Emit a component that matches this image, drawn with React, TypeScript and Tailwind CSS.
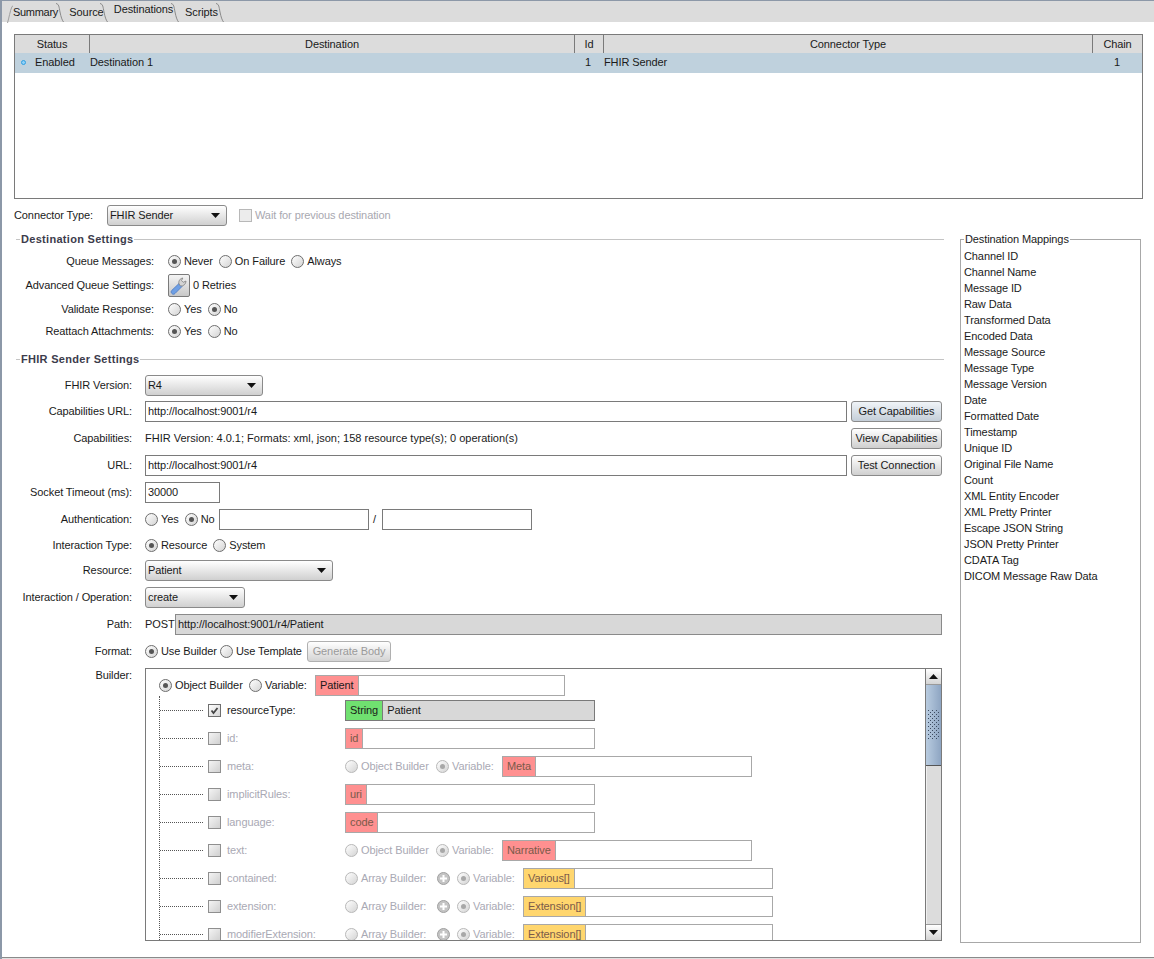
import React from 'react';

const MAPPINGS = [
  'Channel ID', 'Channel Name', 'Message ID', 'Raw Data', 'Transformed Data', 'Encoded Data', 'Message Source',
  'Message Type', 'Message Version', 'Date', 'Formatted Date', 'Timestamp', 'Unique ID', 'Original File Name',
  'Count', 'XML Entity Encoder', 'XML Pretty Printer', 'Escape JSON String', 'JSON Pretty Printer', 'CDATA Tag',
  'DICOM Message Raw Data',
];

type BuilderRow = {
  name: string;
  kind: 'field' | 'object' | 'array';
  type: string;
};

const BUILDER_ROWS: BuilderRow[] = [
  { name: 'id:', kind: 'field', type: 'id' },
  { name: 'meta:', kind: 'object', type: 'Meta' },
  { name: 'implicitRules:', kind: 'field', type: 'uri' },
  { name: 'language:', kind: 'field', type: 'code' },
  { name: 'text:', kind: 'object', type: 'Narrative' },
  { name: 'contained:', kind: 'array', type: 'Various[]' },
  { name: 'extension:', kind: 'array', type: 'Extension[]' },
  { name: 'modifierExtension:', kind: 'array', type: 'Extension[]' },
];

function Radio({ checked, disabled }: { checked?: boolean; disabled?: boolean }) {
  return (
    <span className={`flex h-[13px] w-[13px] shrink-0 items-center justify-center rounded-full border bg-gradient-to-br from-white to-[#d4d4d4] ${disabled ? 'border-[#b8b8b8]' : 'border-[#6e6e6e]'}`}>
      {checked && <span className={`h-[5px] w-[5px] rounded-full ${disabled ? 'bg-[#a8a8a8]' : 'bg-[#555555]'}`} />}
    </span>
  );
}

function RadioLabel({ label, checked, disabled, className = '' }: { label: string; checked?: boolean; disabled?: boolean; className?: string }) {
  return (
    <span className={`flex items-center gap-[3px] ${disabled ? 'text-[#a9a9b4]' : ''} ${className}`}>
      <Radio checked={checked} disabled={disabled} />
      <span>{label}</span>
    </span>
  );
}

function Select({ value, className }: { value: string; className: string }) {
  return (
    <div className={`flex h-[21px] items-center justify-between rounded-[3px] border border-[#8a8a8a] bg-gradient-to-b from-white to-[#d0d0d0] pl-[2px] pr-[6px] ${className}`}>
      <span>{value}</span>
      <svg width="9" height="5" viewBox="0 0 9 5"><path d="M0 0h9L4.5 5z" fill="#111" /></svg>
    </div>
  );
}

function Button({ label, tint, disabled }: { label: string; tint?: boolean; disabled?: boolean }) {
  return (
    <div className={`flex h-[21px] items-center justify-center whitespace-nowrap rounded-[3px] border border-[#8a8a8a] bg-gradient-to-b ${tint ? 'from-[#f0f4f8] to-[#c4ced8]' : 'from-white to-[#cfcfcf]'} ${disabled ? 'w-[84px] border-[#b0b0b0] from-[#e4e4e4] to-[#d4d4d4] text-[#9a9a9a]' : 'w-[91px]'}`}>
      {label}
    </div>
  );
}

function TextInput({ value, className = '' }: { value?: string; className?: string }) {
  return (
    <div className={`flex h-[21px] items-center border border-[#7a7a7a] bg-white px-[2px] ${className}`}>{value}</div>
  );
}

function SectionTitle({ title }: { title: string }) {
  return (
    <div className="flex h-[14px] items-center">
      <div className="h-px w-[4px] bg-[#c4c4c4]" />
      <span className="px-px font-bold tracking-[0.3px] text-[#3c3c4c]">{title}</span>
      <div className="h-px flex-1 bg-[#c4c4c4]" />
    </div>
  );
}

function Row({ label, width, height = 'h-[21px]', className = '', children }: { label: string; width: string; height?: string; className?: string; children?: React.ReactNode }) {
  return (
    <div className={`flex items-center ${height} ${className}`}>
      <div className={`shrink-0 whitespace-nowrap text-right ${width}`}>{label}</div>
      {children}
    </div>
  );
}

function TypedField({ type, color, value, disabled, className }: { type: string; color: 'red' | 'yellow' | 'green'; value?: string; disabled?: boolean; className: string }) {
  const bg = color === 'red' ? 'bg-[#ff9090]' : color === 'yellow' ? 'bg-[#ffd66e]' : 'bg-[#70e070]';
  return (
    <div className={`flex h-[21px] shrink-0 items-center border ${color === 'green' ? 'border-[#7a7a7a] bg-[#d8d8d8]' : 'border-[#a8a8a8] bg-white'} ${className}`}>
      <span className={`flex h-full items-center border-r px-[4px] ${color === 'green' ? 'border-[#7a7a7a]' : 'border-[#a8a8a8]'} ${bg} ${disabled ? 'text-[#7a5a4a]' : ''}`}>{type}</span>
      {value && <span className="px-[4px]">{value}</span>}
    </div>
  );
}

function WrenchIcon() {
  return (
    <svg width="20" height="21" viewBox="0 0 20 21">
      <path d="M3.500 19c-1.500-1-1.800-2.500-.8-3.500L10 8.500l3 3-7 7c-.8.8-1.700 1-2.500.500z" fill="#6f9fe4" stroke="#4a78c0" strokeWidth="0.8" />
      <path d="M10 9c-.8-3 1-5.500 3.800-6l-1.300 2.600 1.700 1.700 2.800-1.300c0 3-2.500 5.300-5.500 5z" fill="#d4d4d4" stroke="#808080" strokeWidth="0.8" />
    </svg>
  );
}

function TreeRow({ row }: { row: BuilderRow }) {
  const color = row.kind === 'array' ? 'yellow' : 'red';
  return (
    <div className="flex h-[28px] shrink-0 items-center text-[#a9a9b4]">
      <div className="w-[43px] shrink-0 border-t border-dotted border-[#555555]" />
      <div className="ml-[5px] h-[13px] w-[13px] shrink-0 border border-[#8f8f8f] bg-gradient-to-br from-[#f4f4f4] to-[#d0d0d0]" />
      <span className="ml-[6px] w-[118px] shrink-0 whitespace-nowrap">{row.name}</span>
      {row.kind === 'field' && <TypedField type={row.type} color={color} disabled className="w-[250px]" />}
      {row.kind === 'object' && (
        <>
          <RadioLabel label="Object Builder" disabled className="w-[91px] shrink-0" />
          <RadioLabel label="Variable:" checked disabled className="w-[66px] shrink-0" />
          <TypedField type={row.type} color={color} disabled className="w-[250px]" />
        </>
      )}
      {row.kind === 'array' && (
        <>
          <RadioLabel label="Array Builder:" disabled className="w-[92px] shrink-0" />
          <span className="w-[20px] shrink-0">
            <span className="flex h-[13px] w-[13px] items-center justify-center rounded-full border border-[#a0a0a0] bg-[#c4c4c4]">
              <svg width="7" height="7" viewBox="0 0 7 7"><path d="M2.500 0h2v2.500H7v2H4.500V7h-2V4.500H0v-2h2.500z" fill="#fff" /></svg>
            </span>
          </span>
          <RadioLabel label="Variable:" checked disabled className="w-[66px] shrink-0" />
          <TypedField type={row.type} color={color} disabled className="w-[250px]" />
        </>
      )}
    </div>
  );
}

function Scrollbar() {
  return (
    <div className="flex w-[16px] shrink-0 flex-col border-l border-[#7a7a7a] bg-[#dcdcdc]">
      <div className="flex h-[16px] shrink-0 items-center justify-center border-b border-[#9a9a9a] bg-gradient-to-b from-white to-[#d4d4d4]">
        <svg width="9" height="5" viewBox="0 0 9 5"><path d="M4.500 0 9 5H0z" fill="#111" /></svg>
      </div>
      <div className="flex h-[81px] shrink-0 items-center justify-center border-b border-[#555555] bg-gradient-to-r from-[#b9cce0] to-[#8ea5c2]">
        <svg width="11" height="30" viewBox="0 0 11 30">
          <defs>
            <pattern id="grip" width="4" height="4" patternUnits="userSpaceOnUse">
              <rect x="0" y="0" width="1" height="1" fill="#3c4a60" />
              <rect x="2" y="2" width="1" height="1" fill="#3c4a60" />
            </pattern>
          </defs>
          <rect width="11" height="30" fill="url(#grip)" />
        </svg>
      </div>
      <div className="flex-1 border-l border-[#f0f0f0]" />
      <div className="flex h-[16px] shrink-0 items-center justify-center border-t border-[#9a9a9a] bg-gradient-to-b from-white to-[#d4d4d4]">
        <svg width="9" height="5" viewBox="0 0 9 5"><path d="M0 0h9L4.500 5z" fill="#111" /></svg>
      </div>
    </div>
  );
}

function Tab({ label, active, width, className = '' }: { label: string; active?: boolean; width: string; className?: string }) {
  return (
    <div className={`relative flex h-[22px] shrink-0 items-center justify-center ${width} ${active ? 'pb-[3px]' : 'pt-[2px]'} ${className}`}>
      {label}
      <svg className="absolute right-0 top-[3px]" width="8" height="19" viewBox="0 0 8 19" fill="none">
        <path d="M0 .5C3 1 3 4 4 9s2 8 3.500 10" stroke="#8a8a8a" />
      </svg>
    </div>
  );
}

export default function App() {
  return (
    <div className="flex h-[959px] w-[1154px] flex-col overflow-hidden border-l-2 border-t border-[#8c98a8] bg-white font-['Liberation_Sans',Arial,sans-serif] text-[11px] leading-[13px] tracking-[-0.1px] text-[#1a1a1a]">
      <div className="flex h-[21px] shrink-0 items-end bg-[#dcdcdc] pl-[5px]">
        <svg className="mb-[-1px] shrink-0" width="6" height="18" viewBox="0 0 6 18" fill="none">
          <path d="M.5 18C2 13 3 6 5 1.500L6 1" stroke="#a0a0a0" />
        </svg>
        <Tab label="Summary" width="w-[51px]" className="pr-[6px] tracking-[-0.3px]" />
        <Tab label="Source" width="w-[44px]" className="pl-[1px]" />
        <Tab label="Destinations" active width="w-[71px]" />
        <Tab label="Scripts" width="w-[45px]" />
      </div>

      <div className="ml-[12px] mt-[12px] h-[165px] w-[1129px] shrink-0 border border-[#7a7a7a]">
        <div className="flex h-[18px] bg-[#dcdcdc] text-center">
          <div className="flex w-[75px] items-center justify-center border-r border-[#7a7a7a]">Status</div>
          <div className="flex w-[485px] items-center justify-center border-r border-[#7a7a7a]">Destination</div>
          <div className="flex w-[29px] items-center justify-center border-r border-[#7a7a7a]">Id</div>
          <div className="flex w-[489px] items-center justify-center border-r border-[#7a7a7a]">Connector Type</div>
          <div className="flex flex-1 items-center justify-center">Chain</div>
        </div>
        <div className="flex h-[20px] items-center bg-[#bfd1dd] pb-[2px]">
          <div className="flex w-[75px] items-center pl-[6px]">
            <span className="h-[5px] w-[5px] rounded-full border border-[#2f9fe0] bg-[#8fd0f8]" />
            <span className="ml-[9px]">Enabled</span>
          </div>
          <div className="w-[485px]">Destination 1</div>
          <div className="w-[29px] pr-[13px] text-right">1</div>
          <div className="w-[489px]">FHIR Sender</div>
          <div className="flex-1 pr-[22px] text-right">1</div>
        </div>
      </div>

      <div className="flex min-h-0 flex-1">
        <div className="w-[942px] shrink-0">
          <div className="ml-[12px] mt-[6px] flex h-[21px] items-center">
            <span className="w-[93px] shrink-0">Connector Type:</span>
            <Select value="FHIR Sender" className="w-[120px]" />
            <span className="ml-[12px] h-[13px] w-[13px] border border-[#b8b8b8] bg-[#ececec]" />
            <span className="ml-[3px] text-[#a8a8b0]">Wait for previous destination</span>
          </div>

          <div className="ml-[14px] mt-[6px]">
            <SectionTitle title="Destination Settings" />
            <Row label="Queue Messages:" width="w-[138px]" height="h-[22px]" className="mt-[4px]">
              <div className="ml-[14px] flex items-center gap-[6px]">
                <RadioLabel label="Never" checked />
                <RadioLabel label="On Failure" />
                <RadioLabel label="Always" />
              </div>
            </Row>
            <Row label="Advanced Queue Settings:" width="w-[138px]" height="h-[23px]" className="mt-[2px]">
              <div className="ml-[14px] flex h-[23px] w-[22px] items-center justify-center rounded-[2px] border border-[#7a7a7a] bg-gradient-to-b from-[#f4f4f4] to-[#c8c8c8]">
                <WrenchIcon />
              </div>
              <span className="ml-[3px]">0 Retries</span>
            </Row>
            <Row label="Validate Response:" width="w-[138px]" height="h-[22px]" className="mt-px">
              <div className="ml-[14px] flex items-center gap-[6px]">
                <RadioLabel label="Yes" />
                <RadioLabel label="No" checked />
              </div>
            </Row>
            <Row label="Reattach Attachments:" width="w-[138px]" height="h-[22px]">
              <div className="ml-[14px] flex items-center gap-[6px]">
                <RadioLabel label="Yes" checked />
                <RadioLabel label="No" />
              </div>
            </Row>

            <div className="mt-[10px]">
              <SectionTitle title="FHIR Sender Settings" />
            </div>

            <Row label="FHIR Version:" width="w-[116px]" className="mt-[9px]">
              <Select value="R4" className="ml-[13px] w-[118px]" />
            </Row>
            <Row label="Capabilities URL:" width="w-[116px]" className="mt-[5px]">
              <TextInput value="http://localhost:9001/r4" className="ml-[13px] w-[702px]" />
              <div className="ml-[4px]"><Button label="Get Capabilities" tint /></div>
            </Row>
            <Row label="Capabilities:" width="w-[116px]" className="mt-[6px]">
              <span className="ml-[13px] w-[706px] tracking-normal">FHIR Version: 4.0.1; Formats: xml, json; 158 resource type(s); 0 operation(s)</span>
              <Button label="View Capabilities" />
            </Row>
            <Row label="URL:" width="w-[116px]" className="mt-[6px]">
              <TextInput value="http://localhost:9001/r4" className="ml-[13px] w-[702px]" />
              <div className="ml-[4px]"><Button label="Test Connection" /></div>
            </Row>
            <Row label="Socket Timeout (ms):" width="w-[116px]" className="mt-[6px]">
              <TextInput value="30000" className="ml-[13px] w-[75px]" />
            </Row>
            <Row label="Authentication:" width="w-[116px]" className="mt-[6px]">
              <div className="ml-[13px] flex w-[74px] items-center gap-[6px]">
                <RadioLabel label="Yes" />
                <RadioLabel label="No" checked />
              </div>
              <TextInput className="w-[150px]" />
              <span className="w-[13px] pl-[4px]">/</span>
              <TextInput className="w-[150px]" />
            </Row>
            <Row label="Interaction Type:" width="w-[116px]" className="mt-[5px]">
              <div className="ml-[13px] flex items-center gap-[6px]">
                <RadioLabel label="Resource" checked />
                <RadioLabel label="System" />
              </div>
            </Row>
            <Row label="Resource:" width="w-[116px]" className="mt-[4px]">
              <Select value="Patient" className="ml-[13px] w-[188px]" />
            </Row>
            <Row label="Interaction / Operation:" width="w-[116px]" className="mt-[6px]">
              <Select value="create" className="ml-[13px] w-[100px]" />
            </Row>
            <Row label="Path:" width="w-[116px]" className="mt-[6px]">
              <span className="ml-[13px] w-[30px]">POST</span>
              <div className="flex h-[21px] w-[767px] items-center border border-[#8a8a8a] bg-[#d8d8d8] px-[2px]">http://localhost:9001/r4/Patient</div>
            </Row>
            <Row label="Format:" width="w-[116px]" className="mt-[6px]">
              <div className="ml-[13px] flex w-[162px] items-center">
                <RadioLabel label="Use Builder" checked className="w-[75px] shrink-0" />
                <RadioLabel label="Use Template" />
              </div>
              <Button label="Generate Body" disabled />
            </Row>

            <div className="mt-[6px] flex h-[273px] items-start">
              <div className="w-[116px] shrink-0 pt-[1px] text-right">Builder:</div>
              <div className="ml-[13px] flex h-[273px] w-[797px] border border-[#7a7a7a]">
                <div className="min-w-0 flex-1 overflow-hidden pl-[13px] pt-[6px]">
                  <div className="flex h-[21px] items-center">
                    <RadioLabel label="Object Builder" checked className="w-[90px] shrink-0" />
                    <RadioLabel label="Variable:" className="w-[66px] shrink-0" />
                    <TypedField type="Patient" color="red" className="w-[250px]" />
                  </div>
                  <div className="flex h-[300px] flex-col border-l border-dotted border-[#555555]">
                    <div className="flex h-[28px] shrink-0 items-center">
                      <div className="w-[43px] shrink-0 border-t border-dotted border-[#555555]" />
                      <div className="ml-[5px] flex h-[13px] w-[13px] shrink-0 items-center justify-center border border-[#6e6e6e] bg-gradient-to-br from-white to-[#d4d4d4]">
                        <svg width="9" height="9" viewBox="0 0 9 9" fill="none"><path d="M1.500 4.500 3.500 7l4-5" stroke="#444" strokeWidth="1.800" /></svg>
                      </div>
                      <span className="ml-[6px] w-[118px] shrink-0">resourceType:</span>
                      <TypedField type="String" color="green" value="Patient" className="w-[250px]" />
                    </div>
                    {BUILDER_ROWS.map((row) => (
                      <TreeRow key={row.name} row={row} />
                    ))}
                  </div>
                </div>
                <Scrollbar />
              </div>
            </div>
          </div>
        </div>

        <fieldset className="ml-[16px] mt-[34px] h-[710px] w-[181px] shrink-0 border border-[#a8a8a8] pl-[3px]">
          <legend className="px-px leading-[13px]">Destination Mappings</legend>
          <div className="mt-[2px] flex flex-col">
            {MAPPINGS.map((m) => (
              <div key={m} className="flex h-[16px] items-center">{m}</div>
            ))}
          </div>
        </fieldset>
      </div>

      <div className="h-[2px] shrink-0 border-t border-[#8a8a8a] bg-[#e0e0e0]" />
    </div>
  );
}
